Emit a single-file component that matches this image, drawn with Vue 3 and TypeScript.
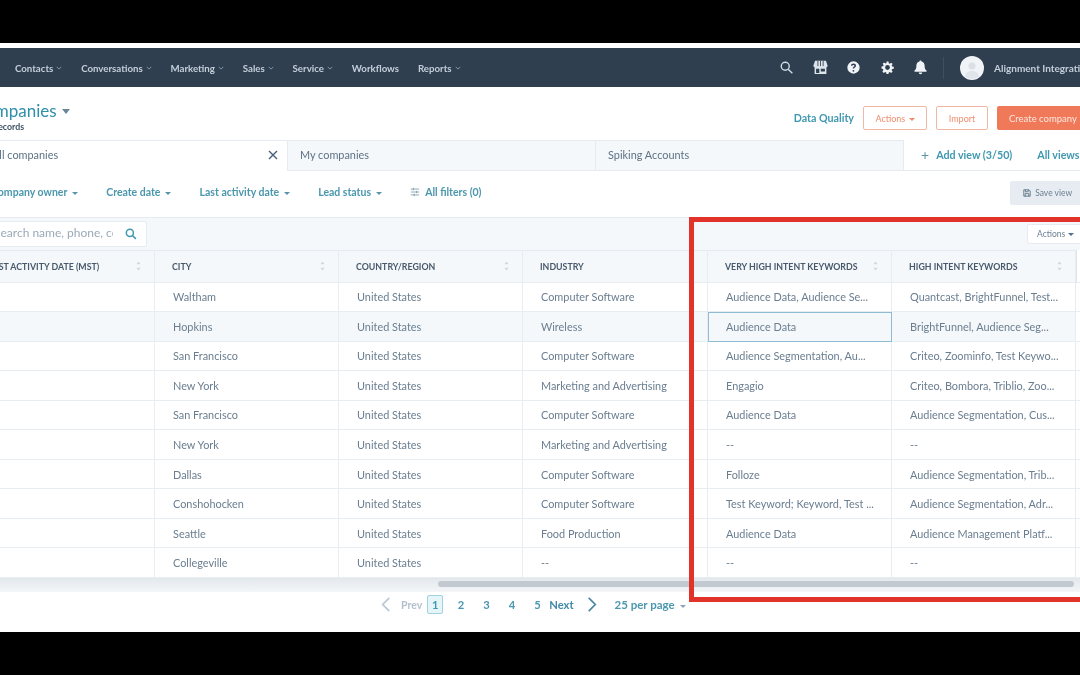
<script setup lang="ts">
interface Row { city: string; country: string; industry: string; veryHigh: string; high: string }
const navItems = [
  { label: 'Contacts', caret: true },
  { label: 'Conversations', caret: true },
  { label: 'Marketing', caret: true },
  { label: 'Sales', caret: true },
  { label: 'Service', caret: true },
  { label: 'Workflows', caret: false },
  { label: 'Reports', caret: true },
]
const filters = ['Company owner', 'Create date', 'Last activity date', 'Lead status']
const headers = ['LAST ACTIVITY DATE (MST)', 'CITY', 'COUNTRY/REGION', 'INDUSTRY', 'VERY HIGH INTENT KEYWORDS', 'HIGH INTENT KEYWORDS']
const rows: Row[] = [
  { city: 'Waltham', country: 'United States', industry: 'Computer Software', veryHigh: 'Audience Data, Audience Se...', high: 'Quantcast, BrightFunnel, Test...' },
  { city: 'Hopkins', country: 'United States', industry: 'Wireless', veryHigh: 'Audience Data', high: 'BrightFunnel, Audience Seg...' },
  { city: 'San Francisco', country: 'United States', industry: 'Computer Software', veryHigh: 'Audience Segmentation, Au...', high: 'Criteo, Zoominfo, Test Keywo...' },
  { city: 'New York', country: 'United States', industry: 'Marketing and Advertising', veryHigh: 'Engagio', high: 'Criteo, Bombora, Triblio, Zoo...' },
  { city: 'San Francisco', country: 'United States', industry: 'Computer Software', veryHigh: 'Audience Data', high: 'Audience Segmentation, Cus...' },
  { city: 'New York', country: 'United States', industry: 'Marketing and Advertising', veryHigh: '--', high: '--' },
  { city: 'Dallas', country: 'United States', industry: 'Computer Software', veryHigh: 'Folloze', high: 'Audience Segmentation, Trib...' },
  { city: 'Conshohocken', country: 'United States', industry: 'Computer Software', veryHigh: 'Test Keyword; Keyword, Test ...', high: 'Audience Segmentation, Adr...' },
  { city: 'Seattle', country: 'United States', industry: 'Food Production', veryHigh: 'Audience Data', high: 'Audience Management Platf...' },
  { city: 'Collegeville', country: 'United States', industry: '--', veryHigh: '--', high: '--' },
]
const pages = [2, 3, 4, 5]
</script>

<template>
  <div class="screen">
    <div class="page">
      <header class="nav">
        <nav class="nav-links">
          <span v-for="item in navItems" :key="item.label" class="nav-link">
            {{ item.label }}
            <svg v-if="item.caret" class="chev" viewBox="0 0 8 5"><path d="M1 1l3 3 3-3" /></svg>
          </span>
        </nav>
        <div class="nav-icons">
          <svg class="ic ic-search" viewBox="-1 -1 18 18"><circle cx="6.5" cy="6.5" r="4.8" /><path d="M10 10l5 5" /></svg>
          <svg class="ic ic-store" viewBox="0 0 16 16">
            <path class="store-fill" d="M2.200 .8h11.600L15.600 6a1.900 1.900 0 0 1-1.300 1.700V15H1.700V7.700A1.900 1.900 0 0 1 .4 6z" />
            <path class="store-cut" d="M5.200 1v5.500M8 1v5.500M10.800 1v5.500" />
            <path class="store-hole" d="M3.300 9.200h3.400v4.600H3.300zM8.300 9.200h4.400v3H8.300z" />
          </svg>
          <svg class="ic ic-fill" viewBox="-1 -1 18 18"><path d="M8 .6a7.400 7.400 0 1 0 0 14.800A7.400 7.400 0 0 0 8 .6zm-.1 10.300a1.100 1.100 0 1 1 0 2.200 1.100 1.100 0 0 1 0-2.200zM8 3.300c1.800 0 3 1 3 2.500 0 1.100-.6 1.700-1.400 2.200-.6.400-.8.600-.8 1.300H7c0-1.100.4-1.800 1.200-2.300.6-.4.900-.6.900-1.100 0-.6-.5-1-1.200-1s-1.200.4-1.300 1.100H4.900C5 4.400 6.300 3.300 8 3.300z" fill-rule="evenodd" /></svg>
          <svg class="ic ic-fill" viewBox="-2 -2 20 20"><path d="M6.700 0h2.600l.4 2.300 1.400.6 1.900-1.300 1.800 1.800-1.300 1.900.6 1.400 2.300.4v2.600l-2.300.4-.6 1.400 1.300 1.900-1.800 1.800-1.900-1.300-1.400.6-.4 2.300H6.700l-.4-2.300-1.400-.6-1.900 1.300-1.800-1.800 1.300-1.900-.6-1.400L0 9.300V6.700l2.300-.4.6-1.400-1.300-1.900 1.800-1.800 1.900 1.300 1.400-.6zM8 4.800a3.200 3.200 0 1 0 0 6.400 3.200 3.200 0 0 0 0-6.400z" fill-rule="evenodd" /></svg>
          <svg class="ic ic-fill" viewBox="0 0 16 16"><path d="M8 .4c.7 0 1.100.5 1.100 1.200 2.200.5 3.300 2.200 3.300 4.400 0 2.700.6 4.100 2 5.300v1.200H1.600v-1.200c1.400-1.200 2-2.600 2-5.300C3.600 3.800 4.700 2.100 6.900 1.600 6.900.9 7.300.4 8 .4zM6.100 13.400h3.800a1.900 1.900 0 0 1-3.800 0z" /></svg>
        </div>
        <span class="nav-divider"></span>
        <span class="avatar">
          <svg viewBox="0 0 24 24"><circle cx="12" cy="12" r="12" fill="#f1f4f7" /><circle cx="12" cy="10" r="3.500" fill="#d9e0e6" /><path d="M5 20.500c.8-4 3.500-5.500 7-5.500s6.200 1.500 7 5.500a12 12 0 0 1-14 0z" fill="#dfe5ea" /></svg>
        </span>
        <span class="account">Alignment Integration</span>
      </header>

      <section class="title-row">
        <div class="title-block">
          <div class="title">Companies <i class="tri tri-title"></i></div>
          <div class="records">records</div>
        </div>
        <div class="title-actions">
          <a class="link-strong">Data Quality</a>
          <button class="btn btn-outline btn-actions">Actions <i class="tri tri-orange"></i></button>
          <button class="btn btn-outline btn-import">Import</button>
          <button class="btn btn-solid">Create company</button>
        </div>
      </section>

      <section class="tabs">
        <div class="tab tab-active">
          <span>All companies</span>
          <svg class="close" viewBox="0 0 10 10"><path d="M1 1l8 8M9 1l-8 8" /></svg>
        </div>
        <div class="tab">My companies</div>
        <div class="tab tab-last">Spiking Accounts</div>
        <div class="tab-tools">
          <span class="plus">+</span>
          <a class="tool-link add-view">Add view (3/50)</a>
          <a class="tool-link">All views</a>
        </div>
      </section>

      <section class="filters">
        <a v-for="f in filters" :key="f" class="filter">{{ f }} <i class="tri tri-teal"></i></a>
        <a class="filter all-filters">
          <svg class="sliders" viewBox="0 0 12 12"><path d="M1 2.500h10M1 6h10M1 9.500h10M4 1v3M8 4.500v3M5 8v3" /></svg>
          All filters (0)
        </a>
        <button class="save-view">
          <svg class="floppy" viewBox="0 0 10 10"><path d="M1 1h6.500L9 2.500V9H1zM3 1v2.500h3.500V1M2.800 9V5.800h4.400V9" /></svg>
          Save view
        </button>
      </section>

      <section class="table-wrap">
        <div class="toolbar">
          <div class="search">
            <span class="search-text">Search name, phone, company</span>
            <svg class="search-icon" viewBox="0 0 16 16"><circle cx="6.500" cy="6.500" r="4.700" /><path d="M10 10l4.500 4.500" /></svg>
          </div>
          <button class="table-actions">Actions <i class="tri tri-small"></i></button>
        </div>
        <div class="grid-row head">
          <div v-for="h in headers" :key="h" class="cell head-cell">
            <span>{{ h }}</span>
            <svg class="sort" viewBox="0 0 6 12"><path d="M3 .5L5.500 4h-5zM3 11.500L.5 8h5z" /></svg>
          </div>
          <div class="cell tail"></div>
        </div>
        <div v-for="(r, i) in rows" :key="i" class="grid-row" :class="{ hovered: i === 1 }">
          <div class="cell"></div>
          <div class="cell">{{ r.city }}</div>
          <div class="cell">{{ r.country }}</div>
          <div class="cell">{{ r.industry }}</div>
          <div class="cell" :class="{ selected: i === 1 }">{{ r.veryHigh }}</div>
          <div class="cell">{{ r.high }}</div>
          <div class="cell tail"></div>
        </div>
        <div class="scroll-track"><div class="scroll-thumb"></div></div>
      </section>

      <footer class="pager">
        <svg class="pg-arrow pg-prev" viewBox="0 0 10 16"><path d="M8.500 1L1.500 8l7 7" /></svg>
        <span class="prev">Prev</span>
        <span class="page-on">1</span>
        <span class="page-list">
          <span v-for="p in pages" :key="p" class="page-num">{{ p }}</span>
        </span>
        <span class="next">Next</span>
        <svg class="pg-arrow pg-next" viewBox="0 0 10 16"><path d="M1.500 1l7 7-7 7" /></svg>
        <span class="per-page">25 per page <i class="tri tri-gray"></i></span>
      </footer>

      <div class="callout"></div>
    </div>
  </div>
</template>

<style>
html, body { margin: 0; background: #000; }
</style>

<style scoped>
.screen {
  width: 1080px;
  height: 675px;
  background: #000;
  padding: 43px 0;
  box-sizing: border-box;
  overflow: hidden;
  font-family: Lato, "Open Sans", sans-serif;
  color: #516f90;
}
.page {
  position: relative;
  height: 589px;
  background: #fff;
  overflow: hidden;
  padding-top: 5px;
  box-sizing: border-box;
  filter: blur(0.4px);
}
.nav {
  height: 39px;
  background: #2f3f50;
  display: flex;
  align-items: center;
}
.nav-links { display: flex; flex: none; margin-left: 15px; width: 770px; }
.nav-link {
  display: inline-flex;
  align-items: center;
  gap: 3px;
  margin-right: 18.800px;
  font-size: 9.700px;
  font-weight: 700;
  color: #c3ced9;
}
.chev { width: 6px; height: 4px; fill: none; stroke: #9fb0c0; stroke-width: 1; }
.nav-icons { display: flex; flex: none; align-items: center; gap: 18.500px; margin-left: -6px; }
.ic { width: 15px; height: 15px; flex: none; }
.ic-search { fill: none; stroke: #cfd9e2; stroke-width: 1.700; }
.ic-fill { fill: #f1f4f7; }
.store-fill { fill: #dde4ea; }
.store-cut { fill: none; stroke: #2f3f50; stroke-width: .9; }
.store-hole { fill: #2f3f50; }
.nav-divider { flex: none; width: 1px; height: 22px; background: #3e4f61; margin: 0 16px 0 15px; }
.avatar { flex: none; width: 24px; height: 24px; display: block; }
.avatar svg { display: block; width: 24px; height: 24px; }
.account { flex: none; margin-left: 10px; font-size: 10px; font-weight: 700; color: #c3ced9; white-space: nowrap; }

.title-row { display: flex; justify-content: space-between; height: 53px; }
.title-block { margin-left: -26px; padding-top: 14px; }
.title { font-size: 17px; line-height: 20px; font-weight: 400; color: #2d8fa8; }
.records { font-size: 8.800px; font-weight: 700; color: #3f5265; line-height: 10px; margin: 1px 0 0 21px; }
.tri { display: inline-block; border-style: solid; border-color: transparent; border-width: 3px 3px 0; vertical-align: middle; }
.tri-title { border-width: 5px 4.500px 0; border-top-color: #6c8599; margin: 0 0 3px 1px; }
.tri-orange { border-top-color: #ef8a6c; margin-left: 1px; }
.tri-teal { border-top-color: #5b93a8; margin-left: 2px; }
.tri-gray { border-top-color: #8fa3b3; margin-left: 3px; }
.tri-small { border-top-color: #516f90; margin-left: 1px; }
.title-actions { display: flex; align-items: flex-start; padding-top: 19px; margin-right: -20px; }
.link-strong { font-size: 10.700px; line-height: 23px; font-weight: 700; color: #3f98b0; margin: 0 9px 0 -2px; }
.btn { height: 24px; font-family: inherit; font-size: 9px; border-radius: 2px; padding: 0; box-sizing: border-box; }
.btn-outline { background: #fff; border: 1px solid #f0b7a4; color: #f08e6f; }
.btn-actions { width: 64px; margin-right: 9px; }
.btn-import { width: 52px; margin-right: 9px; }
.btn-solid { width: 103px; background: #f0795a; color: #fde8e0; border: 0; font-size: 9.500px; text-align: left; padding-left: 12px; }

.tabs { display: flex; height: 31px; border-bottom: 1px solid #e5ebf0; box-sizing: border-box; }
.tab {
  width: 308px;
  border: 1px solid #e5ebf0;
  border-bottom: 0;
  border-left: 0;
  background: #f5f8fa;
  font-size: 10.900px;
  color: #5d7285;
  line-height: 28px;
  padding-left: 12px;
  box-sizing: border-box;
}
.tab-active {
  width: 288px;
  margin-left: 0;
  padding-left: 0;
  background: #fff;
  display: flex;
  align-items: center;
  justify-content: space-between;
  padding-right: 9px;
  padding-bottom: 2px;
  position: relative;
  margin-bottom: -1px;
}
.tab-active span { margin-left: -8px; }
.close { width: 10px; height: 10px; fill: none; stroke: #45607a; stroke-width: 1.400; }
.tab-tools { display: flex; align-items: center; height: 29px; margin-left: 17px; white-space: nowrap; }
.plus { font-size: 14px; color: #5b93a8; margin-right: 7px; line-height: 14px; }
.tool-link { font-size: 10.700px; font-weight: 700; color: #3f98b0; }
.add-view { margin-right: 25px; }

.filters { position: relative; display: flex; align-items: center; height: 46px; padding-bottom: 4px; box-sizing: border-box; margin-left: -9px; gap: 28.500px; }
.filter { font-size: 10.500px; font-weight: 700; color: #4b97ad; white-space: nowrap; }
.all-filters { display: inline-flex; align-items: center; gap: 5px; }
.sliders { width: 10px; height: 10px; fill: none; stroke: #6f8ea3; stroke-width: .9; }
.save-view {
  position: absolute;
  left: 1019px;
  top: 10px;
  width: 90px;
  height: 24px;
  border: 0;
  border-radius: 2px;
  background: #e6ecf2;
  color: #6d8092;
  font-family: inherit;
  font-size: 8.500px;
  text-align: left;
  padding-left: 13px;
}
.floppy { width: 8px; height: 8px; fill: none; stroke: #4f6578; stroke-width: 1; vertical-align: -1px; margin-right: 2px; }

.table-wrap { margin-left: -29px; width: 1139px; }
.toolbar {
  height: 33px;
  background: #f5f8fa;
  border-top: 1px solid #e5ebf0;
  box-sizing: border-box;
  display: flex;
  align-items: center;
  position: relative;
}
.search {
  width: 176px;
  height: 26px;
  background: #fff;
  border: 1px solid #e5ebf0;
  border-radius: 2px;
  box-sizing: border-box;
  display: flex;
  align-items: center;
  padding-left: 22px;
}
.search-text { width: 119px; overflow: hidden; white-space: nowrap; font-size: 12px; line-height: 14px; padding-bottom: 2px; color: #9aaab8; }
.search-icon { width: 12px; height: 12px; margin-left: 12px; fill: none; stroke: #3f98b0; stroke-width: 2; }
.table-actions {
  position: absolute;
  left: 1056px;
  top: 6px;
  width: 70px;
  height: 20px;
  background: #fff;
  border: 1px solid #e5ebf0;
  border-radius: 2px;
  font-family: inherit;
  font-size: 8.500px;
  color: #6d8092;
  text-align: left;
  padding-left: 9px;
}
.grid-row {
  display: grid;
  grid-template-columns: 184px 184px 184px 185px 184px 184px 1fr;
  height: 29.550px;
  background: #fff;
}
.hovered { background: #f5f8fa; }
.head { height: 32.500px; background: #f5f8fa; }
.cell {
  display: flex;
  align-items: center;
  padding-left: 18px;
  box-sizing: border-box;
  border-right: 1px solid #e8edf2;
  border-bottom: 1px solid #e8edf2;
  font-size: 10.900px;
  color: #6a7e90;
  white-space: nowrap;
  overflow: hidden;
}
.tail { border-right: 0; background: #fff; }
.head .tail { border-left: 1px solid #dfe5eb; }
.head-cell {
  justify-content: space-between;
  padding-left: 17px;
  padding-right: 13px;
  font-size: 8.800px;
  font-weight: 700;
  color: #47596b;
  border-top: 1px solid #e5ebf0;
}
.sort { width: 5px; height: 10px; fill: #cfd8e0; flex: none; }
.selected { border: 1px solid #8fbcd0; background: #f5f8fa; padding-left: 17px; }

.scroll-track { height: 14px; background: linear-gradient(#e3e8ed, #f4f6f8); position: relative; }
.scroll-thumb {
  position: absolute;
  left: 467px;
  width: 636px;
  top: 3px;
  height: 6px;
  border-radius: 3px;
  background: #c2c9d0;
}

.pager { display: flex; align-items: center; height: 26px; padding-left: 381px; font-size: 11.200px; }
.pg-arrow { width: 10px; height: 15px; fill: none; stroke-width: 1.800; flex: none; }
.pg-prev { stroke: #b9c8d3; }
.pg-next { stroke: #4a87a3; margin-left: 13px; }
.prev { color: #b3c1cc; margin: 0 5px 0 10px; font-size: 10.500px; font-weight: 700; }
.page-on {
  width: 16px;
  height: 19px;
  line-height: 18px;
  text-align: center;
  background: #e5f5f8;
  border: 1px solid #9fd3df;
  border-radius: 2px;
  box-sizing: border-box;
  color: #3f98b0;
  font-weight: 700;
}
.page-list { display: flex; margin-left: 5px; }
.page-num { width: 25.500px; text-align: center; color: #4b97ad; font-weight: 700; }
.next { color: #3f8aa6; font-weight: 700; margin-left: -1px; }
.per-page { margin-left: 18px; color: #4b97ad; font-weight: 700; font-size: 11.500px; }

.callout {
  position: absolute;
  left: 689px;
  top: 174px;
  width: 420px;
  height: 385px;
  border: 5px solid #e1332a;
  box-sizing: border-box;
  pointer-events: none;
}
</style>
